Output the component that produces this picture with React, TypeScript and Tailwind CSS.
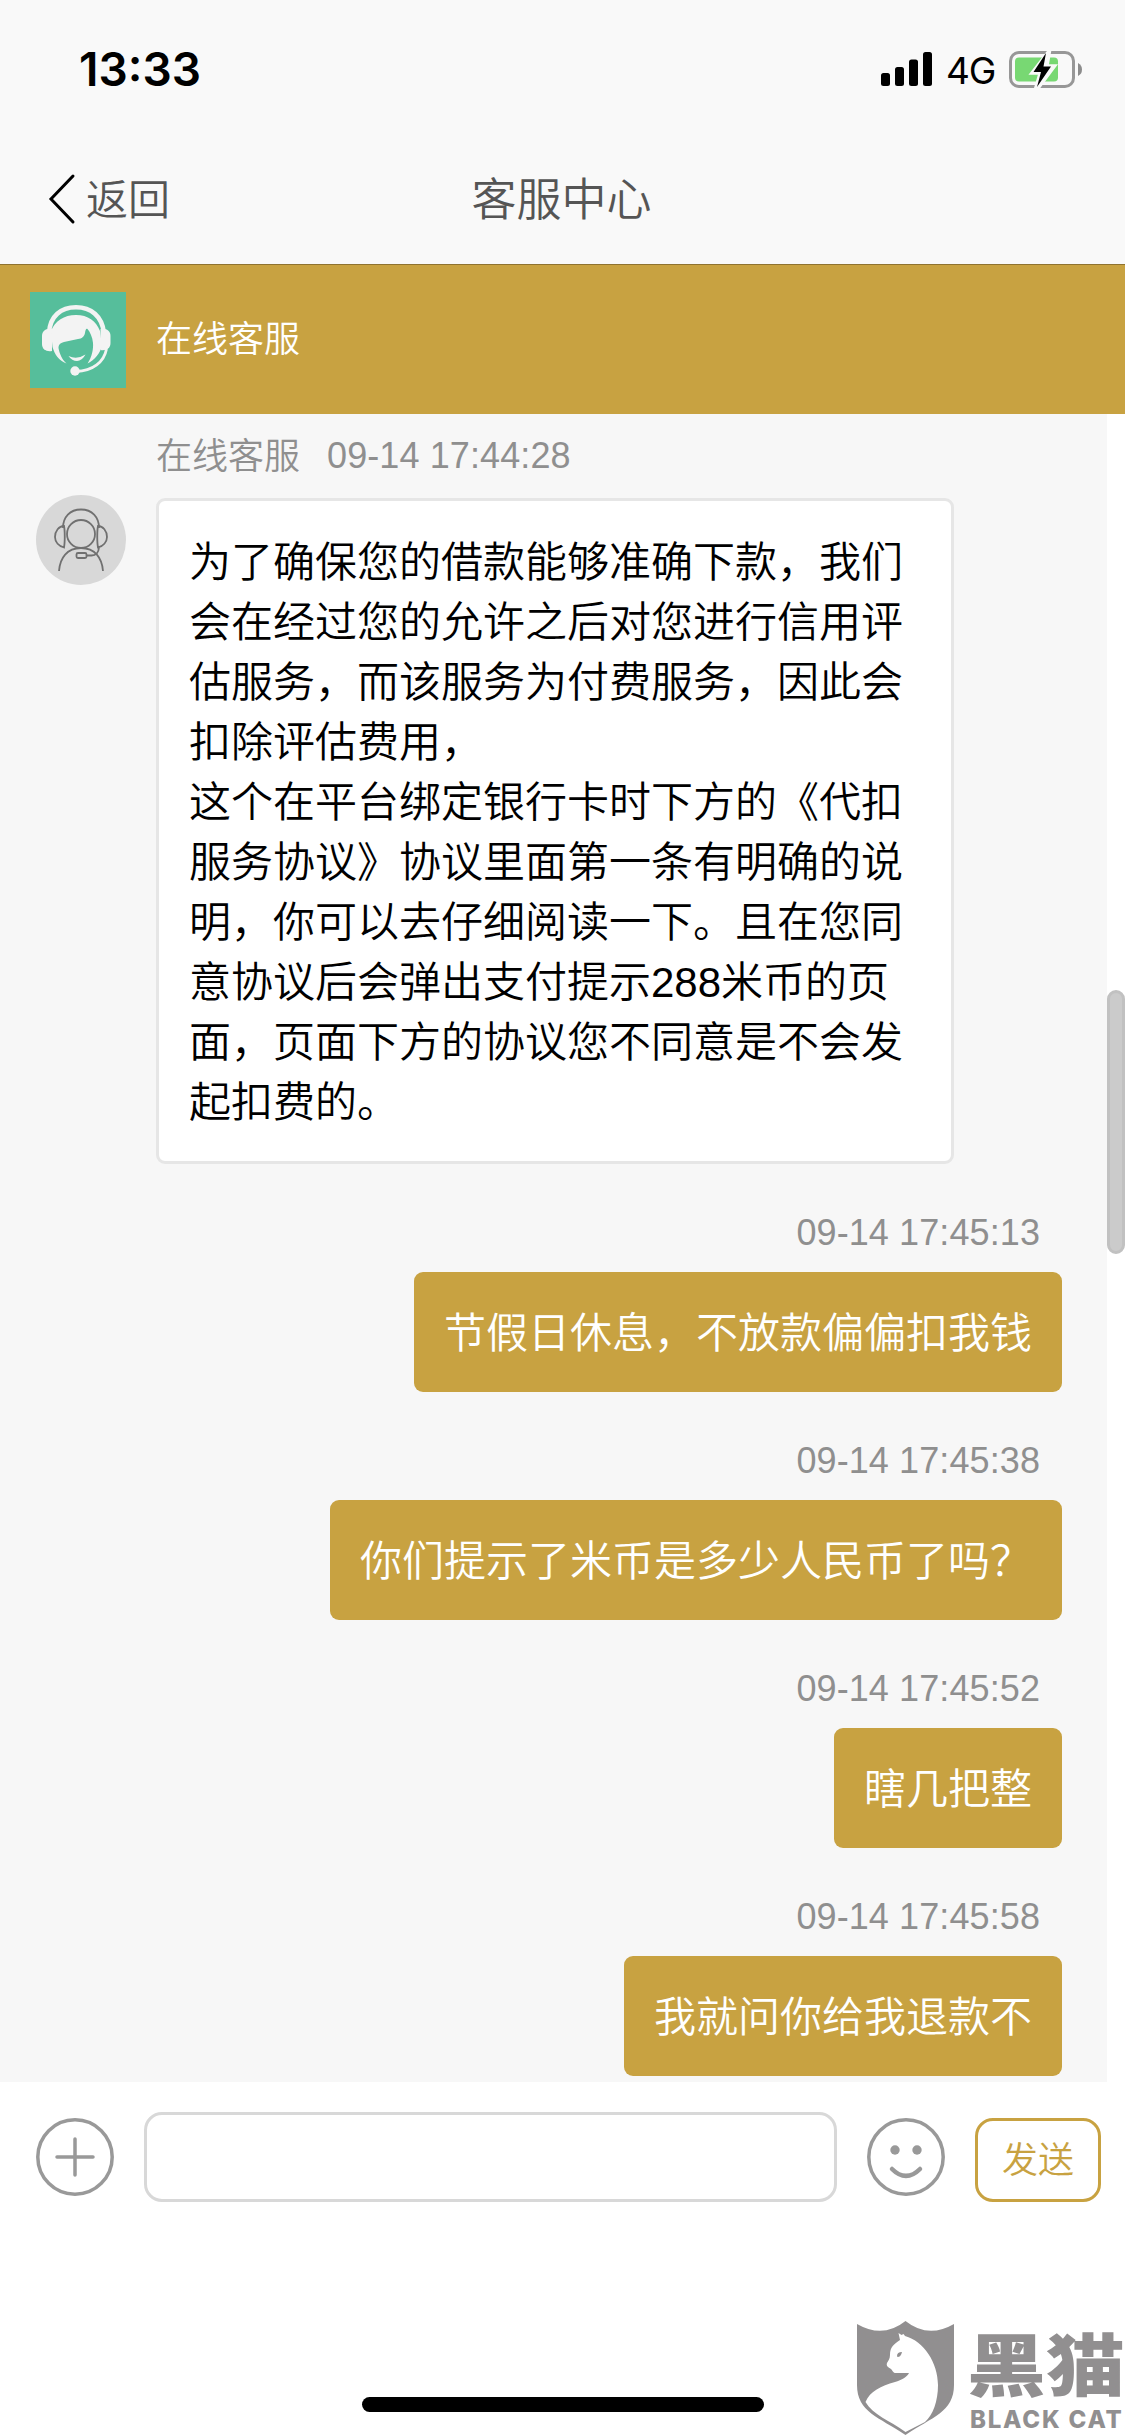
interface Message {
  id: number;
  time: string;
  text: string;
}

const agentText = `为了确保您的借款能够准确下款，我们
会在经过您的允许之后对您进行信用评
估服务，而该服务为付费服务，因此会
扣除评估费用，
这个在平台绑定银行卡时下方的《代扣
服务协议》协议里面第一条有明确的说
明，你可以去仔细阅读一下。且在您同
意协议后会弹出支付提示288米币的页
面，页面下方的协议您不同意是不会发
起扣费的。`;

const messages: Message[] = [
  { id: 1, time: '09-14 17:45:13', text: '节假日休息，不放款偏偏扣我钱' },
  { id: 2, time: '09-14 17:45:38', text: '你们提示了米币是多少人民币了吗？' },
  { id: 3, time: '09-14 17:45:52', text: '瞎几把整' },
  { id: 4, time: '09-14 17:45:58', text: '我就问你给我退款不' },
];

function SignalIcon() {
  return (
    <svg width="51" height="34" viewBox="0 0 51 34">
      <rect x="0" y="21" width="9" height="13" rx="2.5" />
      <rect x="14" y="15" width="9" height="19" rx="2.5" />
      <rect x="28" y="7.5" width="9" height="26.5" rx="2.5" />
      <rect x="42" y="0" width="9" height="34" rx="2.5" />
    </svg>
  );
}

function BatteryIcon() {
  return (
    <svg width="74" height="40" viewBox="0 0 74 40">
      <rect x="1.5" y="3.5" width="63" height="34" rx="8.5" fill="none" stroke="#979797" strokeWidth="3" />
      <path d="M69 14q4 2 4 6.500t-4 6.500z" fill="#8c8c8c" />
      <rect x="6" y="8.500" width="43" height="24" rx="4" fill="#78d873" />
      <path
        d="M39.500 2L22 24.500h8.500L26 40h3L46.500 16.500h-8L41 2z"
        fill="#f9f9f9"
        stroke="#f9f9f9"
        strokeWidth="2.500"
      />
      <path d="M37 4L24.500 23h7.500L28 38L42 17.500h-7.500z" fill="#000" />
    </svg>
  );
}

function ServiceLogo() {
  return (
    <svg width="96" height="96" viewBox="0 0 96 96" className="bg-[#56be9b]">
      <path d="M19 41C20 24 31 15.300 46 15.300S72 24 74 41" fill="none" stroke="#f3f3f3" strokeWidth="4.600" />
      <path d="M22 37c-7-1-10 3-10 7v8c0 5 4 8 10 7z" fill="#f3f3f3" />
      <path d="M70.500 37c7-1 10 3 10 7v7c0 5-4 8-10 7z" fill="#f3f3f3" />
      <path
        d="M21 39C25 29 34 23 46 23s20 6 24 16l2 15c-2 7-7 14-14.500 17.500C62 65 63.500 57 63 51c-.500-6-3-11-5.500-14C56 36 55.500 38 55 41c-1 4-3 5.500-7 6l-14 3c-4 1-5.500 3-5.500 6 1 6 4 12 8 15.500C29 69 24.500 62 22.500 55z"
        fill="#f3f3f3"
      />
      <path d="M76.500 57C74 70 63 79 46 79.500" fill="none" stroke="#f3f3f3" strokeWidth="2.800" />
      <circle cx="45" cy="79" r="4.700" fill="#f3f3f3" />
      <path d="M38.500 64q8.500 4 17-1.500Q52 69 47 69t-8.500-5z" fill="#f3f3f3" />
    </svg>
  );
}

function AgentAvatar() {
  return (
    <svg
      width="90"
      height="90"
      viewBox="0 0 90 90"
      className="shrink-0 rounded-full bg-[#d8d8d8]"
      fill="none"
      stroke="#707070"
      strokeWidth="1.800"
    >
      <circle cx="45" cy="39" r="14" />
      <path d="M27 33C27 22 34 14.500 45 14.500S63 22 63 33" />
      <path d="M28 31c-5 0-9 5-9 11 0 5 4 9 9 10.500 1-5 1-17 0-21.500zM62 31c5 0 9 5 9 11 0 5-4 9-9 10.500-1-5-1-17 0-21.500z" />
      <path d="M23 76c1-13 8-23 22-23s21 10 22 23" />
      <rect x="40.500" y="58" width="10" height="5" rx="1.500" />
      <path d="M50.500 60.500h5c4 0 7-3 7.500-8" />
    </svg>
  );
}

function Watermark() {
  return (
    <div className="absolute right-0 bottom-0 flex h-[115px] w-[268px] gap-[15px] text-[#918f90]">
      <svg width="97" height="115" viewBox="0 0 97 115" className="shrink-0">
        <path
          d="M0 3Q26 18 48.500 0 71 18 97 3V64C97 91 75 96 48.500 114 22 96 0 91 0 64z"
          fill="currentColor"
        />
        <path
          d="M41.500 12l3 2 2-1 1.500 2C67 20 81 42 81 64c0 16-5 30-13 37l-19.500 10C32 99 16 94 8.500 81 13 70 24 65 38 61c7-2 12-5 14-9H39c-3 0-3-2-5-4-3-2-5-3-4-6 1-2 3-4 3-8 0-8 4-11 10-15z"
          fill="#fff"
        />
        <path d="M40 35q0-4 5-4-1 5-4.500 5z" fill="currentColor" />
      </svg>
      <div className="flex flex-col items-start pt-[5px]">
        <span className="-ml-[2px] h-[72px] origin-left scale-x-[1.16] font-['Noto_Sans_CJK_SC',sans-serif] text-[68px] leading-[72px] font-black whitespace-nowrap">
          黑猫
        </span>
        <span className="mt-[10px] ml-px font-[Inter,sans-serif] text-[24px] leading-[24px] font-extrabold tracking-[1.8px] whitespace-nowrap">
          BLACK CAT
        </span>
      </div>
    </div>
  );
}

export default function App() {
  return (
    <div
      lang="zh-CN"
      className="relative flex h-[2436px] w-[1125px] flex-col overflow-hidden bg-white font-['Liberation_Sans','Noto_Sans_CJK_SC',sans-serif] font-[350]"
    >
      {/* Status bar */}
      <div className="flex h-[132px] items-center justify-between bg-[#f9f9f9] pt-[6px] pr-[42px] pl-[79px]">
        <span className="font-[Inter,sans-serif] text-[46px] leading-none font-semibold">13:33</span>
        <div className="flex items-center">
          <SignalIcon />
          <span className="mr-[14px] ml-[14px] pt-[3px] font-[Inter,sans-serif] text-[37px] leading-none font-normal tracking-[-1.3px]">
            4G
          </span>
          <BatteryIcon />
        </div>
      </div>

      {/* Nav */}
      <div className="grid h-[133px] grid-cols-3 items-center border-b border-[#8f7330] bg-[#f9f9f9] pt-[2px] text-[#555]">
        <button className="flex items-center pl-[48px] text-[42px] leading-[60px]">
          <svg width="28" height="52" viewBox="0 0 28 52" fill="none" stroke="#000" strokeWidth="3" strokeLinecap="round">
            <path d="M25 3L3 26L25 49" />
          </svg>
          <span className="ml-[10px] pt-[3px]">返回</span>
        </button>
        <h1 className="pt-[3px] pr-[2px] text-center text-[45px] leading-[60px]">客服中心</h1>
      </div>

      <header className="flex h-[149px] items-center bg-[#c8a241] pl-[30px] text-white">
        <ServiceLogo />
        <span className="ml-[30px] text-[36px]">在线客服</span>
      </header>

      {/* Conversation */}
      <div className="flex h-[1668px]">
        <main className="w-[1107px] bg-[#f7f7f7] pr-[45px] pl-[36px]">
          <div className="flex h-[84px] items-center pl-[120px] text-[36px] text-[#8f8f8f]">
            <span className="pt-px">在线客服</span>
            <span className="ml-[27px] tracking-[0.1px]">09-14 17:44:28</span>
          </div>
          <div className="flex gap-[30px]">
            <div className="-mt-[3px]">
              <AgentAvatar />
            </div>
            <p className="w-[798px] rounded-[9px] border-[3px] border-[#e6e6e6] bg-white px-[30px] pt-[32px] pb-[28px] text-[42px] leading-[60px] whitespace-pre text-black">
              {agentText}
            </p>
          </div>
          {messages.map((m) => (
            <div key={m.id} className="flex flex-col items-end">
              <time className="mt-[42px] mr-[22px] mb-[12px] text-[36px] leading-[54px] tracking-[0.1px] text-[#8f8f8f]">
                {m.time}
              </time>
              <p className="rounded-[9px] bg-[#c8a241] px-[30px] pt-[32px] pb-[28px] text-[42px] leading-[60px] whitespace-pre text-white">
                {m.text}
              </p>
            </div>
          ))}
        </main>
        <div className="w-[18px] bg-white pt-[576px]">
          <div className="h-[264px] rounded-full border-[3px] border-[#c1c1c1] bg-[#cbcbcb]" />
        </div>
      </div>

      {/* Input bar */}
      <footer className="flex h-[150px] items-center pr-[24px] pl-[36px]">
        <svg width="78" height="78" viewBox="0 0 78 78" fill="none" stroke="#999" strokeWidth="3.500">
          <circle cx="39" cy="39" r="37.200" />
          <path d="M39 21v36M21 39h36" strokeLinecap="round" />
        </svg>
        <input className="ml-[30px] h-[90px] w-[693px] rounded-[18px] border-[3px] border-[#d8d8d8] bg-white" />
        <svg className="ml-[30px]" width="78" height="78" viewBox="0 0 78 78" fill="none" stroke="#999" strokeWidth="3.500">
          <circle cx="39" cy="39" r="37.200" />
          <circle cx="28" cy="32" r="4.700" fill="#999" stroke="none" />
          <circle cx="50" cy="32" r="4.700" fill="#999" stroke="none" />
          <path d="M25 51q14 14 28 0" strokeWidth="4.500" strokeLinecap="round" />
        </svg>
        <button className="mt-[6px] ml-[30px] h-[84px] w-[126px] rounded-[18px] border-[3px] border-[#c8a241] pt-[2px] text-[36px] leading-none text-[#c8a241]">
          发送
        </button>
      </footer>

      {/* Home indicator */}
      <div className="mx-auto mt-[165px] h-[15px] w-[402px] rounded-full bg-black" />

      <Watermark />
    </div>
  );
}
